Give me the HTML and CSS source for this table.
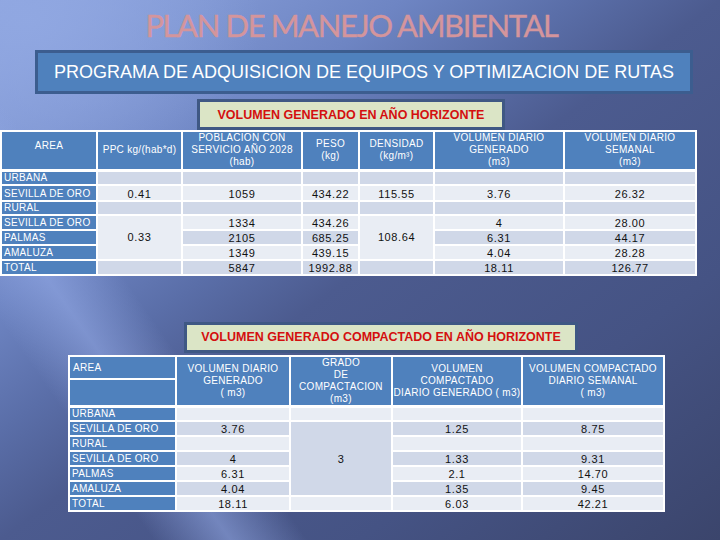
FILE: index.html
```html
<!DOCTYPE html>
<html lang="es">
<head>
<meta charset="utf-8">
<title>Plan de Manejo Ambiental</title>
<link rel="stylesheet" href="styles.css">
</head>
<body>
<div class="slide">
  <h1 class="title">PLAN DE MANEJO AMBIENTAL</h1>
  <div class="program">PROGRAMA DE ADQUISICION DE EQUIPOS Y OPTIMIZACION DE RUTAS</div>

  <div class="caption cap1">VOLUMEN GENERADO EN AÑO HORIZONTE</div>
  <table class="t t1">
    <colgroup>
      <col class="w96"><col class="w85"><col class="w120"><col class="w57"><col class="w75"><col class="w130"><col class="w132">
    </colgroup>
    <tr class="hd">
      <th class="area1">AREA</th>
      <th>PPC kg/(hab*d)</th>
      <th>POBLACION CON<br>SERVICIO AÑO 2028<br>(hab)</th>
      <th>PESO<br>(kg)</th>
      <th>DENSIDAD<br>(kg/m³)</th>
      <th>VOLUMEN DIARIO<br>GENERADO<br>(m3)</th>
      <th>VOLUMEN DIARIO<br>SEMANAL<br>(m3)</th>
    </tr>
    <tr class="r13 dk">
      <td class="lb">URBANA</td><td></td><td></td><td></td><td></td><td></td><td></td>
    </tr>
    <tr class="r16 lt">
      <td class="lb">SEVILLA DE ORO</td><td>0.41</td><td>1059</td><td>434.22</td><td>115.55</td><td>3.76</td><td>26.32</td>
    </tr>
    <tr class="r14 dk">
      <td class="lb">RURAL</td><td></td><td></td><td></td><td></td><td></td><td></td>
    </tr>
    <tr class="r15 lt">
      <td class="lb">SEVILLA DE ORO</td><td rowspan="3" class="l">0.33</td><td>1334</td><td>434.26</td><td rowspan="3" class="l">108.64</td><td>4</td><td>28.00</td>
    </tr>
    <tr class="r15 dk">
      <td class="lb">PALMAS</td><td>2105</td><td>685.25</td><td>6.31</td><td>44.17</td>
    </tr>
    <tr class="r15 lt">
      <td class="lb">AMALUZA</td><td>1349</td><td>439.15</td><td>4.04</td><td>28.28</td>
    </tr>
    <tr class="r15 dk">
      <td class="lb">TOTAL</td><td></td><td>5847</td><td>1992.88</td><td></td><td>18.11</td><td>126.77</td>
    </tr>
  </table>

  <div class="caption cap2">VOLUMEN GENERADO COMPACTADO EN AÑO HORIZONTE</div>
  <table class="t t2">
    <colgroup>
      <col class="w107"><col class="w114"><col class="w102"><col class="w130"><col class="w142">
    </colgroup>
    <tr class="hd2a">
      <th class="area2">AREA</th>
      <th rowspan="2">VOLUMEN DIARIO<br>GENERADO<br>( m3)</th>
      <th rowspan="2">GRADO<br>DE<br>COMPACTACION<br>(m3)</th>
      <th rowspan="2">VOLUMEN<br>COMPACTADO<br>DIARIO GENERADO ( m3)</th>
      <th rowspan="2">VOLUMEN COMPACTADO<br>DIARIO SEMANAL<br>( m3)</th>
    </tr>
    <tr class="hd2b">
      <th></th>
    </tr>
    <tr class="r15 lt">
      <td class="lb">URBANA</td><td></td><td></td><td></td><td></td>
    </tr>
    <tr class="r15 dk">
      <td class="lb">SEVILLA DE ORO</td><td>3.76</td><td rowspan="5" class="d">3</td><td>1.25</td><td>8.75</td>
    </tr>
    <tr class="r15 lt">
      <td class="lb">RURAL</td><td></td><td></td><td></td>
    </tr>
    <tr class="r15 dk">
      <td class="lb">SEVILLA DE ORO</td><td>4</td><td>1.33</td><td>9.31</td>
    </tr>
    <tr class="r15 lt">
      <td class="lb">PALMAS</td><td>6.31</td><td>2.1</td><td>14.70</td>
    </tr>
    <tr class="r15 dk">
      <td class="lb">AMALUZA</td><td>4.04</td><td>1.35</td><td>9.45</td>
    </tr>
    <tr class="r15 lt">
      <td class="lb">TOTAL</td><td>18.11</td><td></td><td>6.03</td><td>42.21</td>
    </tr>
  </table>
</div>
</body>
</html>
```

FILE: styles.css
```css
html, body {
  margin: 0;
  padding: 0;
}

body {
  width: 720px;
  height: 540px;
  overflow: hidden;
  font-family: "Liberation Sans", Arial, sans-serif;
  background:
    linear-gradient(55deg, rgba(150,172,232,0) 14%, rgba(150,172,232,0.55) 21%, rgba(150,172,232,0) 28%),
    radial-gradient(ellipse 230px 170px at 30px 20px, rgba(145,168,226,0.9), rgba(145,168,226,0) 100%),
    linear-gradient(to bottom right, #8ea5df 0%, #7f96d2 15%, #6e85c3 28%, #5a6ea8 40%, #4c5b8f 50%, #455384 75%, #3b456c 100%);
}

.slide {
  display: flex;
  flex-direction: column;
  align-items: flex-start;
  width: 720px;
  height: 540px;
}

.title {
  margin: 0;
  width: 720px;
  box-sizing: border-box;
  padding-right: 17px;
  height: 50px;
  text-align: center;
  font-family: Lato, "Open Sans", sans-serif;
  font-weight: 400;
  font-size: 31px;
  line-height: 50px;
  letter-spacing: -1.4px;
  color: #d4959c;
  -webkit-text-stroke: 0.4px #d4959c;
}

.program {
  margin-left: 35px;
  width: 658px;
  height: 44px;
  box-sizing: border-box;
  border: 3px solid #3c5d8f;
  background: #4f81bd;
  color: #ffffff;
  font-size: 18px;
  display: flex;
  align-items: center;
  justify-content: center;
}

.caption {
  height: 31px;
  box-sizing: border-box;
  border: 3px solid #3f5884;
  background: #dbe5c6;
  color: #d40f0f;
  font-weight: bold;
  font-size: 12.5px;
  display: flex;
  align-items: center;
  justify-content: center;
}

.cap1 {
  margin-top: 5px;
  margin-left: 197px;
  width: 308px;
}

.cap2 {
  margin-top: 46px;
  margin-left: 184px;
  width: 394px;
}

.t {
  border-collapse: collapse;
  table-layout: fixed;
  border: 2px solid #ffffff;
}

.t1 {
  width: 695px;
}

.t2 {
  margin-top: 2px;
  margin-left: 68px;
  width: 595px;
}

.w96 { width: 96px; }
.w85 { width: 85px; }
.w120 { width: 120px; }
.w57 { width: 57px; }
.w75 { width: 75px; }
.w130 { width: 130px; }
.w132 { width: 132px; }
.w107 { width: 107px; }
.w114 { width: 114px; }
.w102 { width: 102px; }
.w142 { width: 142px; }

.t th,
.t td {
  border: 2px solid #ffffff;
  padding: 0;
  overflow: hidden;
  white-space: nowrap;
}

.t th {
  background: #4f81bd;
  color: #ffffff;
  font-weight: normal;
  font-size: 10px;
  line-height: 12px;
  letter-spacing: 0.3px;
  text-align: center;
  vertical-align: middle;
}

.t1 .hd {
  height: 39px;
}

.t1 .hd th {
  border-bottom-width: 3px;
}

.t1 .area1 {
  vertical-align: top;
  padding-top: 8px;
}

.hd2a {
  height: 23px;
}

.hd2b {
  height: 26px;
}

.t2 .area2 {
  text-align: left;
  vertical-align: top;
  padding: 5px 0 0 3px;
}

.t2 .hd2b th {
  border-bottom-width: 3px;
}

.t2 .hd2a th[rowspan] {
  border-bottom-width: 3px;
}

.t td {
  font-size: 11px;
  line-height: 12px;
  letter-spacing: 0.6px;
  color: #111111;
  text-align: center;
  vertical-align: bottom;
}

.lt td { background: #e9edf4; }
.dk td { background: #d0d8e8; }
.t td.l { background: #e9edf4; vertical-align: middle; }
.t td.d { background: #d0d8e8; vertical-align: middle; }

.t td.lb {
  background: #4f81bd;
  color: #ffffff;
  font-size: 10px;
  letter-spacing: 0.3px;
  text-align: left;
  padding-left: 2px;
}

.r13 { height: 13px; }
.r14 { height: 14px; }
.r15 { height: 15px; }
.r16 { height: 16px; }
```
